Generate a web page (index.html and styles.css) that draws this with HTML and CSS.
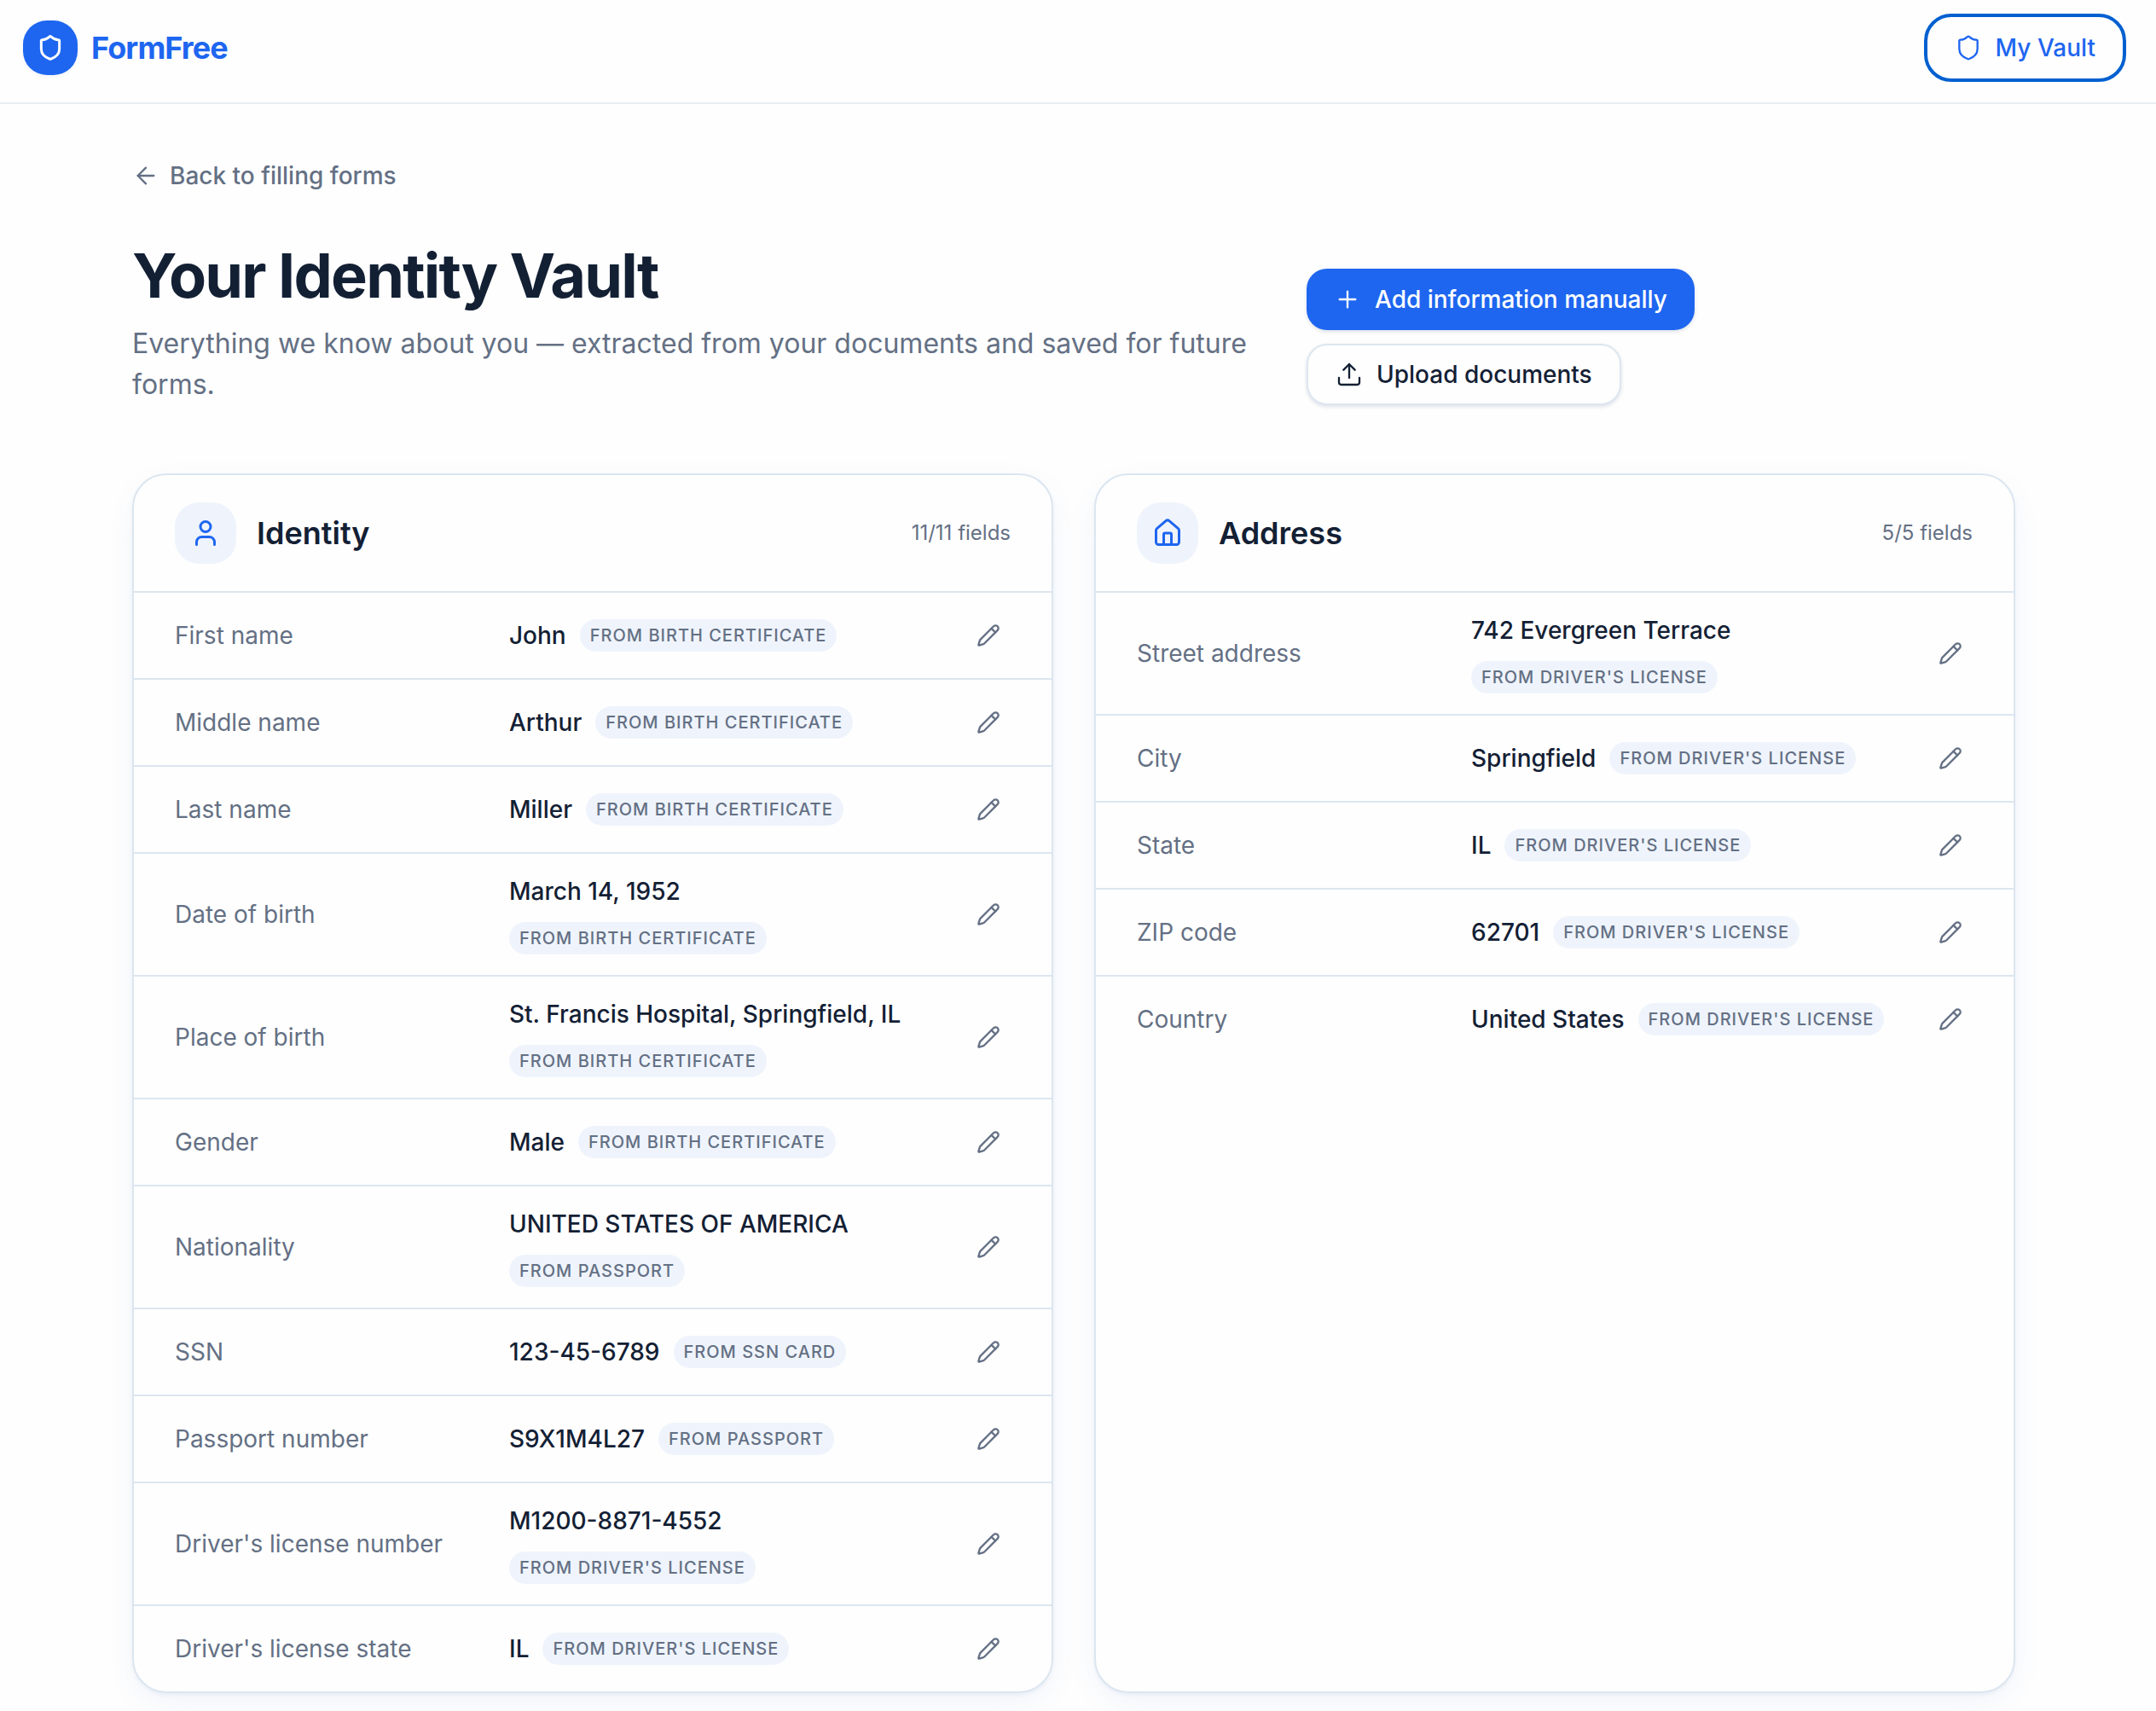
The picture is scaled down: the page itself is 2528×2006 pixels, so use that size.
FILE: index.html
```html
<!DOCTYPE html>
<html lang="en">
<head>
<meta charset="utf-8">
<title>FormFree – Your Identity Vault</title>
<link rel="stylesheet" href="styles.css">
</head>
<body>
<svg class="sprite" aria-hidden="true">
  <symbol id="shield" viewBox="0 0 24 24"><path d="M20 13c0 5-3.5 7.5-7.66 8.95a1 1 0 0 1-.67-.01C7.5 20.5 4 18 4 13V6a1 1 0 0 1 1-1c2 0 4.5-1.2 6.24-2.72a1.17 1.17 0 0 1 1.52 0C14.51 3.81 17 5 19 5a1 1 0 0 1 1 1z"/></symbol>
  <symbol id="arrow-left" viewBox="0 0 24 24"><path d="m12 19-7-7 7-7"/><path d="M19 12H5"/></symbol>
  <symbol id="plus" viewBox="0 0 24 24"><path d="M5 12h14"/><path d="M12 5v14"/></symbol>
  <symbol id="upload" viewBox="0 0 24 24"><path d="M12 3v12"/><path d="m17 8-5-5-5 5"/><path d="M21 15v4a2 2 0 0 1-2 2H5a2 2 0 0 1-2-2v-4"/></symbol>
  <symbol id="user" viewBox="0 0 24 24"><path d="M19 21v-2a4 4 0 0 0-4-4H9a4 4 0 0 0-4 4v2"/><circle cx="12" cy="7" r="4"/></symbol>
  <symbol id="house" viewBox="0 0 24 24"><path d="M15 21v-8a1 1 0 0 0-1-1h-4a1 1 0 0 0-1 1v8"/><path d="M3 10a2 2 0 0 1 .709-1.528l7-5.999a2 2 0 0 1 2.582 0l7 5.999A2 2 0 0 1 21 10v9a2 2 0 0 1-2 2H5a2 2 0 0 1-2-2z"/></symbol>
  <symbol id="pencil" viewBox="0 0 24 24"><path d="M21.174 6.812a1 1 0 0 0-3.986-3.987L3.842 16.174a2 2 0 0 0-.5.83l-1.321 4.352a.5.5 0 0 0 .623.622l4.353-1.32a2 2 0 0 0 .83-.497z"/><path d="m15 5 4 4"/></symbol>
</svg>

<header class="topbar">
  <div class="brand">
    <span class="brand-mark"><svg class="icon icon-bold"><use href="#shield"/></svg></span>
    <span class="brand-name">FormFree</span>
  </div>
  <button class="btn btn-vault"><svg class="icon"><use href="#shield"/></svg>My Vault</button>
</header>

<main class="page">
  <a class="back"><svg class="icon"><use href="#arrow-left"/></svg>Back to filling forms</a>

  <section class="intro">
    <div class="intro-text">
      <h1>Your Identity Vault</h1>
      <p>Everything we know about you — extracted from your documents and saved for future forms.</p>
    </div>
    <div class="actions">
      <button class="btn btn-primary"><svg class="icon"><use href="#plus"/></svg>Add information manually</button>
      <button class="btn btn-outline"><svg class="icon"><use href="#upload"/></svg>Upload documents</button>
    </div>
  </section>

  <section class="cards">
    <article class="card">
      <div class="card-head">
        <span class="card-icon"><svg class="icon"><use href="#user"/></svg></span>
        <h2>Identity</h2>
        <span class="count">11/11 fields</span>
      </div>
      <div class="row"><span class="label">First name</span><div class="value"><span>John</span><span class="pill">From Birth Certificate</span></div><button class="edit"><svg class="icon"><use href="#pencil"/></svg></button></div>
      <div class="row"><span class="label">Middle name</span><div class="value"><span>Arthur</span><span class="pill">From Birth Certificate</span></div><button class="edit"><svg class="icon"><use href="#pencil"/></svg></button></div>
      <div class="row"><span class="label">Last name</span><div class="value"><span>Miller</span><span class="pill">From Birth Certificate</span></div><button class="edit"><svg class="icon"><use href="#pencil"/></svg></button></div>
      <div class="row"><span class="label">Date of birth</span><div class="value"><span>March 14, 1952</span><span class="pill">From Birth Certificate</span></div><button class="edit"><svg class="icon"><use href="#pencil"/></svg></button></div>
      <div class="row"><span class="label">Place of birth</span><div class="value"><span>St. Francis Hospital, Springfield, IL</span><span class="pill">From Birth Certificate</span></div><button class="edit"><svg class="icon"><use href="#pencil"/></svg></button></div>
      <div class="row"><span class="label">Gender</span><div class="value"><span>Male</span><span class="pill">From Birth Certificate</span></div><button class="edit"><svg class="icon"><use href="#pencil"/></svg></button></div>
      <div class="row"><span class="label">Nationality</span><div class="value"><span>UNITED STATES OF AMERICA</span><span class="pill">From Passport</span></div><button class="edit"><svg class="icon"><use href="#pencil"/></svg></button></div>
      <div class="row"><span class="label">SSN</span><div class="value"><span>123-45-6789</span><span class="pill">From SSN Card</span></div><button class="edit"><svg class="icon"><use href="#pencil"/></svg></button></div>
      <div class="row"><span class="label">Passport number</span><div class="value"><span>S9X1M4L27</span><span class="pill">From Passport</span></div><button class="edit"><svg class="icon"><use href="#pencil"/></svg></button></div>
      <div class="row"><span class="label">Driver's license number</span><div class="value"><span>M1200-8871-4552</span><span class="pill">From Driver's License</span></div><button class="edit"><svg class="icon"><use href="#pencil"/></svg></button></div>
      <div class="row"><span class="label">Driver's license state</span><div class="value"><span>IL</span><span class="pill">From Driver's License</span></div><button class="edit"><svg class="icon"><use href="#pencil"/></svg></button></div>
    </article>

    <article class="card">
      <div class="card-head">
        <span class="card-icon"><svg class="icon"><use href="#house"/></svg></span>
        <h2>Address</h2>
        <span class="count">5/5 fields</span>
      </div>
      <div class="row"><span class="label">Street address</span><div class="value"><span>742 Evergreen Terrace</span><span class="pill">From Driver's License</span></div><button class="edit"><svg class="icon"><use href="#pencil"/></svg></button></div>
      <div class="row"><span class="label">City</span><div class="value"><span>Springfield</span><span class="pill">From Driver's License</span></div><button class="edit"><svg class="icon"><use href="#pencil"/></svg></button></div>
      <div class="row"><span class="label">State</span><div class="value"><span>IL</span><span class="pill">From Driver's License</span></div><button class="edit"><svg class="icon"><use href="#pencil"/></svg></button></div>
      <div class="row"><span class="label">ZIP code</span><div class="value"><span>62701</span><span class="pill">From Driver's License</span></div><button class="edit"><svg class="icon"><use href="#pencil"/></svg></button></div>
      <div class="row"><span class="label">Country</span><div class="value"><span>United States</span><span class="pill">From Driver's License</span></div><button class="edit"><svg class="icon"><use href="#pencil"/></svg></button></div>
    </article>
  </section>
</main>
</body>
</html>
```
FILE: styles.css
```css
:root {
  --blue: #1e66f0;
  --ink: #132034;
  --muted: #647084;
  --line: #dce6f0;
  --tint: #eff4fc;
}

* { box-sizing: border-box; }

html, body { height: 100%; }

body {
  margin: 0;
  overflow: hidden;
  background: #fefefe;
  color: var(--ink);
  font-family: Inter, "Liberation Sans", sans-serif;
  font-size: 28px;
  line-height: 40px;
}

h1, h2, p { margin: 0; }

button {
  font: inherit;
  color: inherit;
  background: none;
  border: 0;
  padding: 0;
}

.sprite { position: absolute; width: 0; height: 0; }

.icon {
  width: 32px;
  height: 32px;
  flex: none;
  display: block;
  fill: none;
  stroke: currentColor;
  stroke-width: 1.75;
  stroke-linecap: round;
  stroke-linejoin: round;
}

.icon-bold { stroke-width: 2.25; }

.topbar {
  display: flex;
  justify-content: space-between;
  align-items: center;
  height: 122px;
  padding: 0 39px 8px 27px;
  border-bottom: 2px solid #e8edf2;
}

.brand { display: flex; align-items: center; gap: 16px; }

.brand-mark {
  display: grid;
  place-items: center;
  width: 64px;
  height: 64px;
  border-radius: 28px;
  background: var(--blue);
  color: #fff;
  box-shadow: 0 2px 4px rgba(30, 60, 120, .06);
}

.brand-name {
  color: var(--blue);
  font-size: 36px;
  font-weight: 700;
  letter-spacing: -0.025em;
}

.btn {
  display: flex;
  align-items: center;
  gap: 16px;
  height: 72px;
  padding: 0 32px;
  border-radius: 24px;
  font-weight: 500;
  white-space: nowrap;
}

.btn-vault {
  border-radius: 28px;
  color: var(--blue);
  outline: 4px solid #0060d0;
}

.btn-primary {
  background: var(--blue);
  color: #fff;
  box-shadow: 0 2px 4px rgba(20, 50, 100, .14);
}

.btn-outline {
  background: #fefefe;
  border: 2px solid var(--line);
  box-shadow: 0 2px 4px rgba(20, 50, 100, .14);
}

.page { width: 2208px; margin-left: 155px; padding-top: 64px; }

.back {
  display: flex;
  align-items: center;
  gap: 12px;
  color: var(--muted);
  font-weight: 500;
}

.intro {
  display: grid;
  grid-template-columns: 1329px 1fr;
  column-gap: 48px;
  align-items: end;
  margin: 57px 0 80px;
}

h1 {
  font-size: 72px;
  line-height: 80px;
  font-weight: 700;
  letter-spacing: -0.025em;
}

.intro-text p {
  margin-top: 16px;
  color: var(--muted);
  font-size: 32px;
  line-height: 48px;
}

.actions {
  display: flex;
  flex-direction: column;
  align-items: flex-start;
  gap: 16px;
}

.cards {
  display: grid;
  grid-template-columns: 1fr 1fr;
  gap: 48px;
}

.card {
  border: 2px solid var(--line);
  border-radius: 40px;
  background: #fefefe;
  box-shadow: 0 2px 4px rgba(40, 90, 160, .06), 0 12px 40px -8px rgba(40, 100, 200, .09);
}

.card-head {
  display: flex;
  align-items: center;
  gap: 24px;
  padding: 32px 48px;
}

.card-icon {
  display: grid;
  place-items: center;
  width: 72px;
  height: 72px;
  border-radius: 28px;
  background: var(--tint);
  color: var(--blue);
}

.card-icon .icon { width: 36px; height: 36px; stroke-width: 2; }

h2 { font-size: 36px; font-weight: 600; }

.count { margin-left: auto; color: var(--muted); font-size: 24px; }

.row {
  display: flex;
  align-items: center;
  padding: 24px 48px;
  border-top: 2px solid var(--line);
}

.label { width: 392px; color: var(--muted); }

.value {
  display: flex;
  flex: 1;
  flex-wrap: wrap;
  align-items: center;
  gap: 16px;
  margin-right: 24px;
  font-weight: 500;
}

.pill {
  height: 38px;
  padding: 0 12px;
  border-radius: 19px;
  background: var(--tint);
  color: var(--muted);
  font-size: 20px;
  line-height: 38px;
  letter-spacing: 0.05em;
  text-transform: uppercase;
}

.edit { padding: 12px; color: var(--muted); }

.edit .icon { width: 28px; height: 28px; stroke-width: 2; }
```
